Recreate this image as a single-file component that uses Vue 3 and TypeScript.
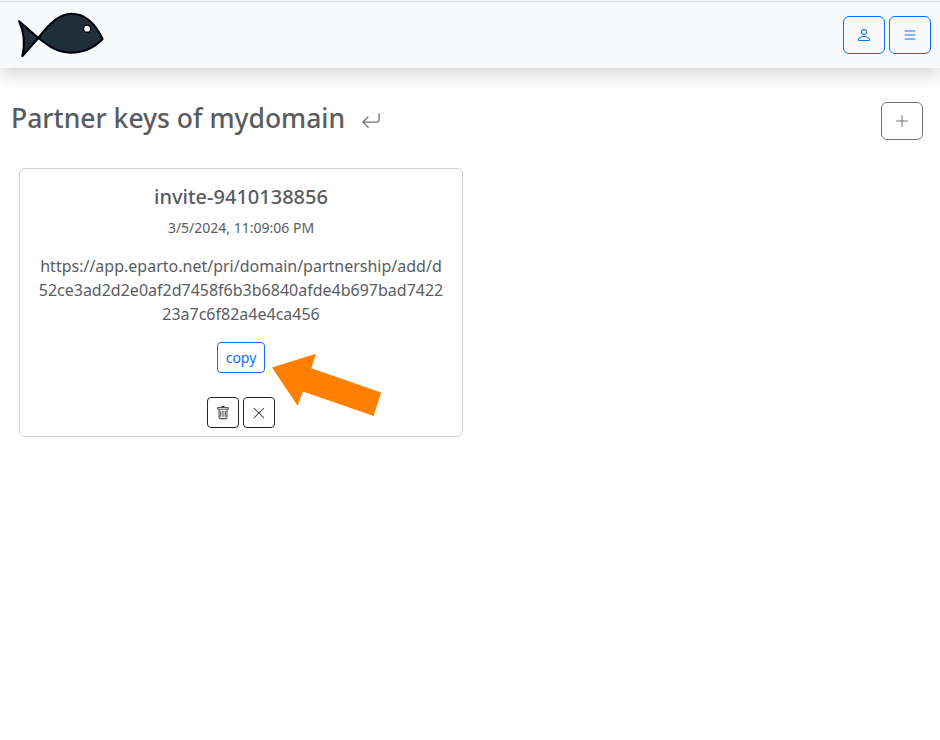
<script setup lang="ts">
interface PartnerKey {
  name: string
  created: string
  url: string
}

const domain: string = 'mydomain'
const keys: PartnerKey[] = [
  {
    name: 'invite-9410138856',
    created: '3/5/2024, 11:09:06 PM',
    url: 'https://app.eparto.net/pri/domain/partnership/add/d52ce3ad2d2e0af2d7458f6b3b6840afde4b697bad742223a7c6f82a4e4ca456',
  },
]
</script>

<template>
  <div class="page">
    <nav class="navbar">
      <a class="brand" aria-label="Home">
        <svg width="90" height="50" viewBox="0 0 90 50">
          <g fill="#212f3d" stroke="#000008" stroke-width="2.1" stroke-linejoin="round">
            <path d="M4.2 11.3 23.3 28 7.4 46Q11.8 28 4.2 11.3Z" />
            <path d="M23.3 28C34 14 44.5 3.8 56.5 3.8S79 11 87.6 29C79.5 37.5 68.5 42.6 55.5 42.6S35 37 23.3 28Z" />
          </g>
          <circle cx="72.1" cy="18.7" r="3.6" fill="#fff" stroke="#000" stroke-width="1.4" />
        </svg>
      </a>
      <div class="nav-actions">
        <button class="btn primary" aria-label="Account">
          <svg class="icon" viewBox="0 0 16 16"><path d="M8 8a3 3 0 1 0 0-6 3 3 0 0 0 0 6m2-3a2 2 0 1 1-4 0 2 2 0 0 1 4 0m4 8c0 1-1 1-1 1H3s-1 0-1-1 1-4 6-4 6 3 6 4m-1-.004c-.001-.246-.154-.986-.832-1.664C11.516 10.68 10.289 10 8 10s-3.516.68-4.168 1.332c-.678.678-.83 1.418-.832 1.664z" /></svg>
        </button>
        <button class="btn primary" aria-label="Menu">
          <svg class="icon" viewBox="0 0 16 16"><path d="M2.5 12a.5.5 0 0 1 .5-.5h10a.5.5 0 0 1 0 1H3a.5.5 0 0 1-.5-.5m0-4a.5.5 0 0 1 .5-.5h10a.5.5 0 0 1 0 1H3a.5.5 0 0 1-.5-.5m0-4a.5.5 0 0 1 .5-.5h10a.5.5 0 0 1 0 1H3a.5.5 0 0 1-.5-.5" /></svg>
        </button>
      </div>
    </nav>

    <header class="heading">
      <h3>Partner keys of {{ domain }}</h3>
      <a class="back" aria-label="Back">
        <svg width="20" height="20" viewBox="0 0 16 16" fill="currentColor"><path d="M14.5 1.5a.5.5 0 0 1 .5.5v4.8a2.5 2.5 0 0 1-2.5 2.5H2.707l3.347 3.346a.5.5 0 0 1-.708.708l-4.2-4.2a.5.5 0 0 1 0-.708l4-4a.5.5 0 1 1 .708.708L2.707 8.3H12.5A1.5 1.5 0 0 0 14 6.8V2a.5.5 0 0 1 .5-.5" /></svg>
      </a>
      <button class="btn secondary add" aria-label="Add">
        <svg class="icon" viewBox="0 0 16 16"><path d="M8 2a.5.5 0 0 1 .5.5v5h5a.5.5 0 0 1 0 1h-5v5a.5.5 0 0 1-1 0v-5h-5a.5.5 0 0 1 0-1h5v-5A.5.5 0 0 1 8 2" /></svg>
      </button>
    </header>

    <main class="cards">
      <article v-for="key in keys" :key="key.name" class="card">
        <h5>{{ key.name }}</h5>
        <p class="date">{{ key.created }}</p>
        <p class="url">{{ key.url }}</p>
        <div class="copy-row">
          <button class="btn sm primary">copy</button>
          <svg class="pointer" width="112" height="66" viewBox="0 0 112 66">
            <path d="M2 15.5 46 1.7 41.3 16.2 111.2 40.5 103.6 64 33 39.5 27.6 53.8Z" fill="#ff8000" />
          </svg>
        </div>
        <div class="card-actions">
          <button class="btn sm dark" aria-label="Delete">
            <svg class="icon" viewBox="0 0 16 16">
              <path d="M5.5 5.5A.5.5 0 0 1 6 6v6a.5.5 0 0 1-1 0V6a.5.5 0 0 1 .5-.5m2.5 0a.5.5 0 0 1 .5.5v6a.5.5 0 0 1-1 0V6a.5.5 0 0 1 .5-.5m3 .5a.5.5 0 0 0-1 0v6a.5.5 0 0 0 1 0z" />
              <path d="M14.5 3a1 1 0 0 1-1 1H13v9a2 2 0 0 1-2 2H5a2 2 0 0 1-2-2V4h-.5a1 1 0 0 1-1-1V2a1 1 0 0 1 1-1H6a1 1 0 0 1 1-1h2a1 1 0 0 1 1 1h3.5a1 1 0 0 1 1 1zM4.118 4 4 4.059V13a1 1 0 0 0 1 1h6a1 1 0 0 0 1-1V4.059L11.882 4zM2.5 3h11V2h-11z" />
            </svg>
          </button>
          <button class="btn sm dark" aria-label="Close">
            <svg class="icon" viewBox="0 0 16 16"><path d="M2.146 2.854a.5.5 0 1 1 .708-.708L8 7.293l5.146-5.147a.5.5 0 0 1 .708.708L8.707 8l5.147 5.146a.5.5 0 0 1-.708.708L8 8.707l-5.146 5.147a.5.5 0 0 1-.708-.708L7.293 8z" /></svg>
          </button>
        </div>
      </article>
    </main>
  </div>
</template>

<style>
body {
  background: #fff;
}
</style>

<style scoped>
* {
  box-sizing: border-box;
}
.page {
  min-height: 740px;
  padding-top: 1px;
  font-family: 'Noto Sans', 'Liberation Sans', sans-serif;
  font-size: 16px;
  line-height: 1.5;
  color: #595c5f;
}
h3,
h5,
p {
  margin: 0;
}
.navbar {
  display: flex;
  align-items: center;
  justify-content: space-between;
  height: 67px;
  padding: 0 9px 0 15px;
  background: #f8f9fa;
  border-top: 1px solid #d5d7d9;
  box-shadow: 0 8px 16px rgba(0, 0, 0, 0.15);
}
.brand,
.brand svg,
.back,
.back svg {
  display: block;
}
.nav-actions {
  display: flex;
  gap: 4px;
}
.btn {
  display: flex;
  align-items: center;
  justify-content: center;
  width: 42px;
  height: 38px;
  padding: 0;
  font: inherit;
  color: inherit;
  background: transparent;
  border: 1px solid currentColor;
  border-radius: 6px;
}
.icon {
  width: 16px;
  height: 16px;
  fill: currentColor;
}
.primary {
  color: #0d6efd;
}
.secondary {
  color: #6c757d;
}
.dark {
  color: #212529;
}
.sm {
  width: 32px;
  height: 31px;
  font-size: 14px;
  line-height: 21px;
  border-radius: 4px;
}
.sm .icon {
  width: 14px;
  height: 14px;
}
.heading {
  display: flex;
  align-items: center;
  height: 38px;
  margin-top: 34px;
  padding: 0 17px 0 11px;
}
.heading h3 {
  margin-top: -6px;
  font-size: 26.5px;
  font-weight: 500;
  line-height: 32px;
}
.back {
  margin-left: 16px;
  color: #6c757d;
}
.add {
  margin-left: auto;
}
.cards {
  display: grid;
  grid-template-columns: 444px;
  padding: 28px 19px;
}
.card {
  display: flex;
  flex-direction: column;
  align-items: center;
  height: 269px;
  padding: 16px 16px 8px;
  text-align: center;
  border: 1px solid #cfd0d1;
  border-radius: 6px;
}
.card h5 {
  font-size: 20px;
  font-weight: 500;
  line-height: 24px;
}
.date {
  margin-top: 8px;
  font-size: 14px;
  line-height: 21px;
}
.url {
  width: 100%;
  margin-top: 16px;
  word-break: break-all;
}
.copy-row {
  position: relative;
  margin-top: 16px;
}
.copy-row .btn {
  width: 48px;
}
.pointer {
  position: absolute;
  top: 10px;
  left: 53px;
}
.card-actions {
  display: flex;
  gap: 4px;
  margin-top: auto;
}
</style>
